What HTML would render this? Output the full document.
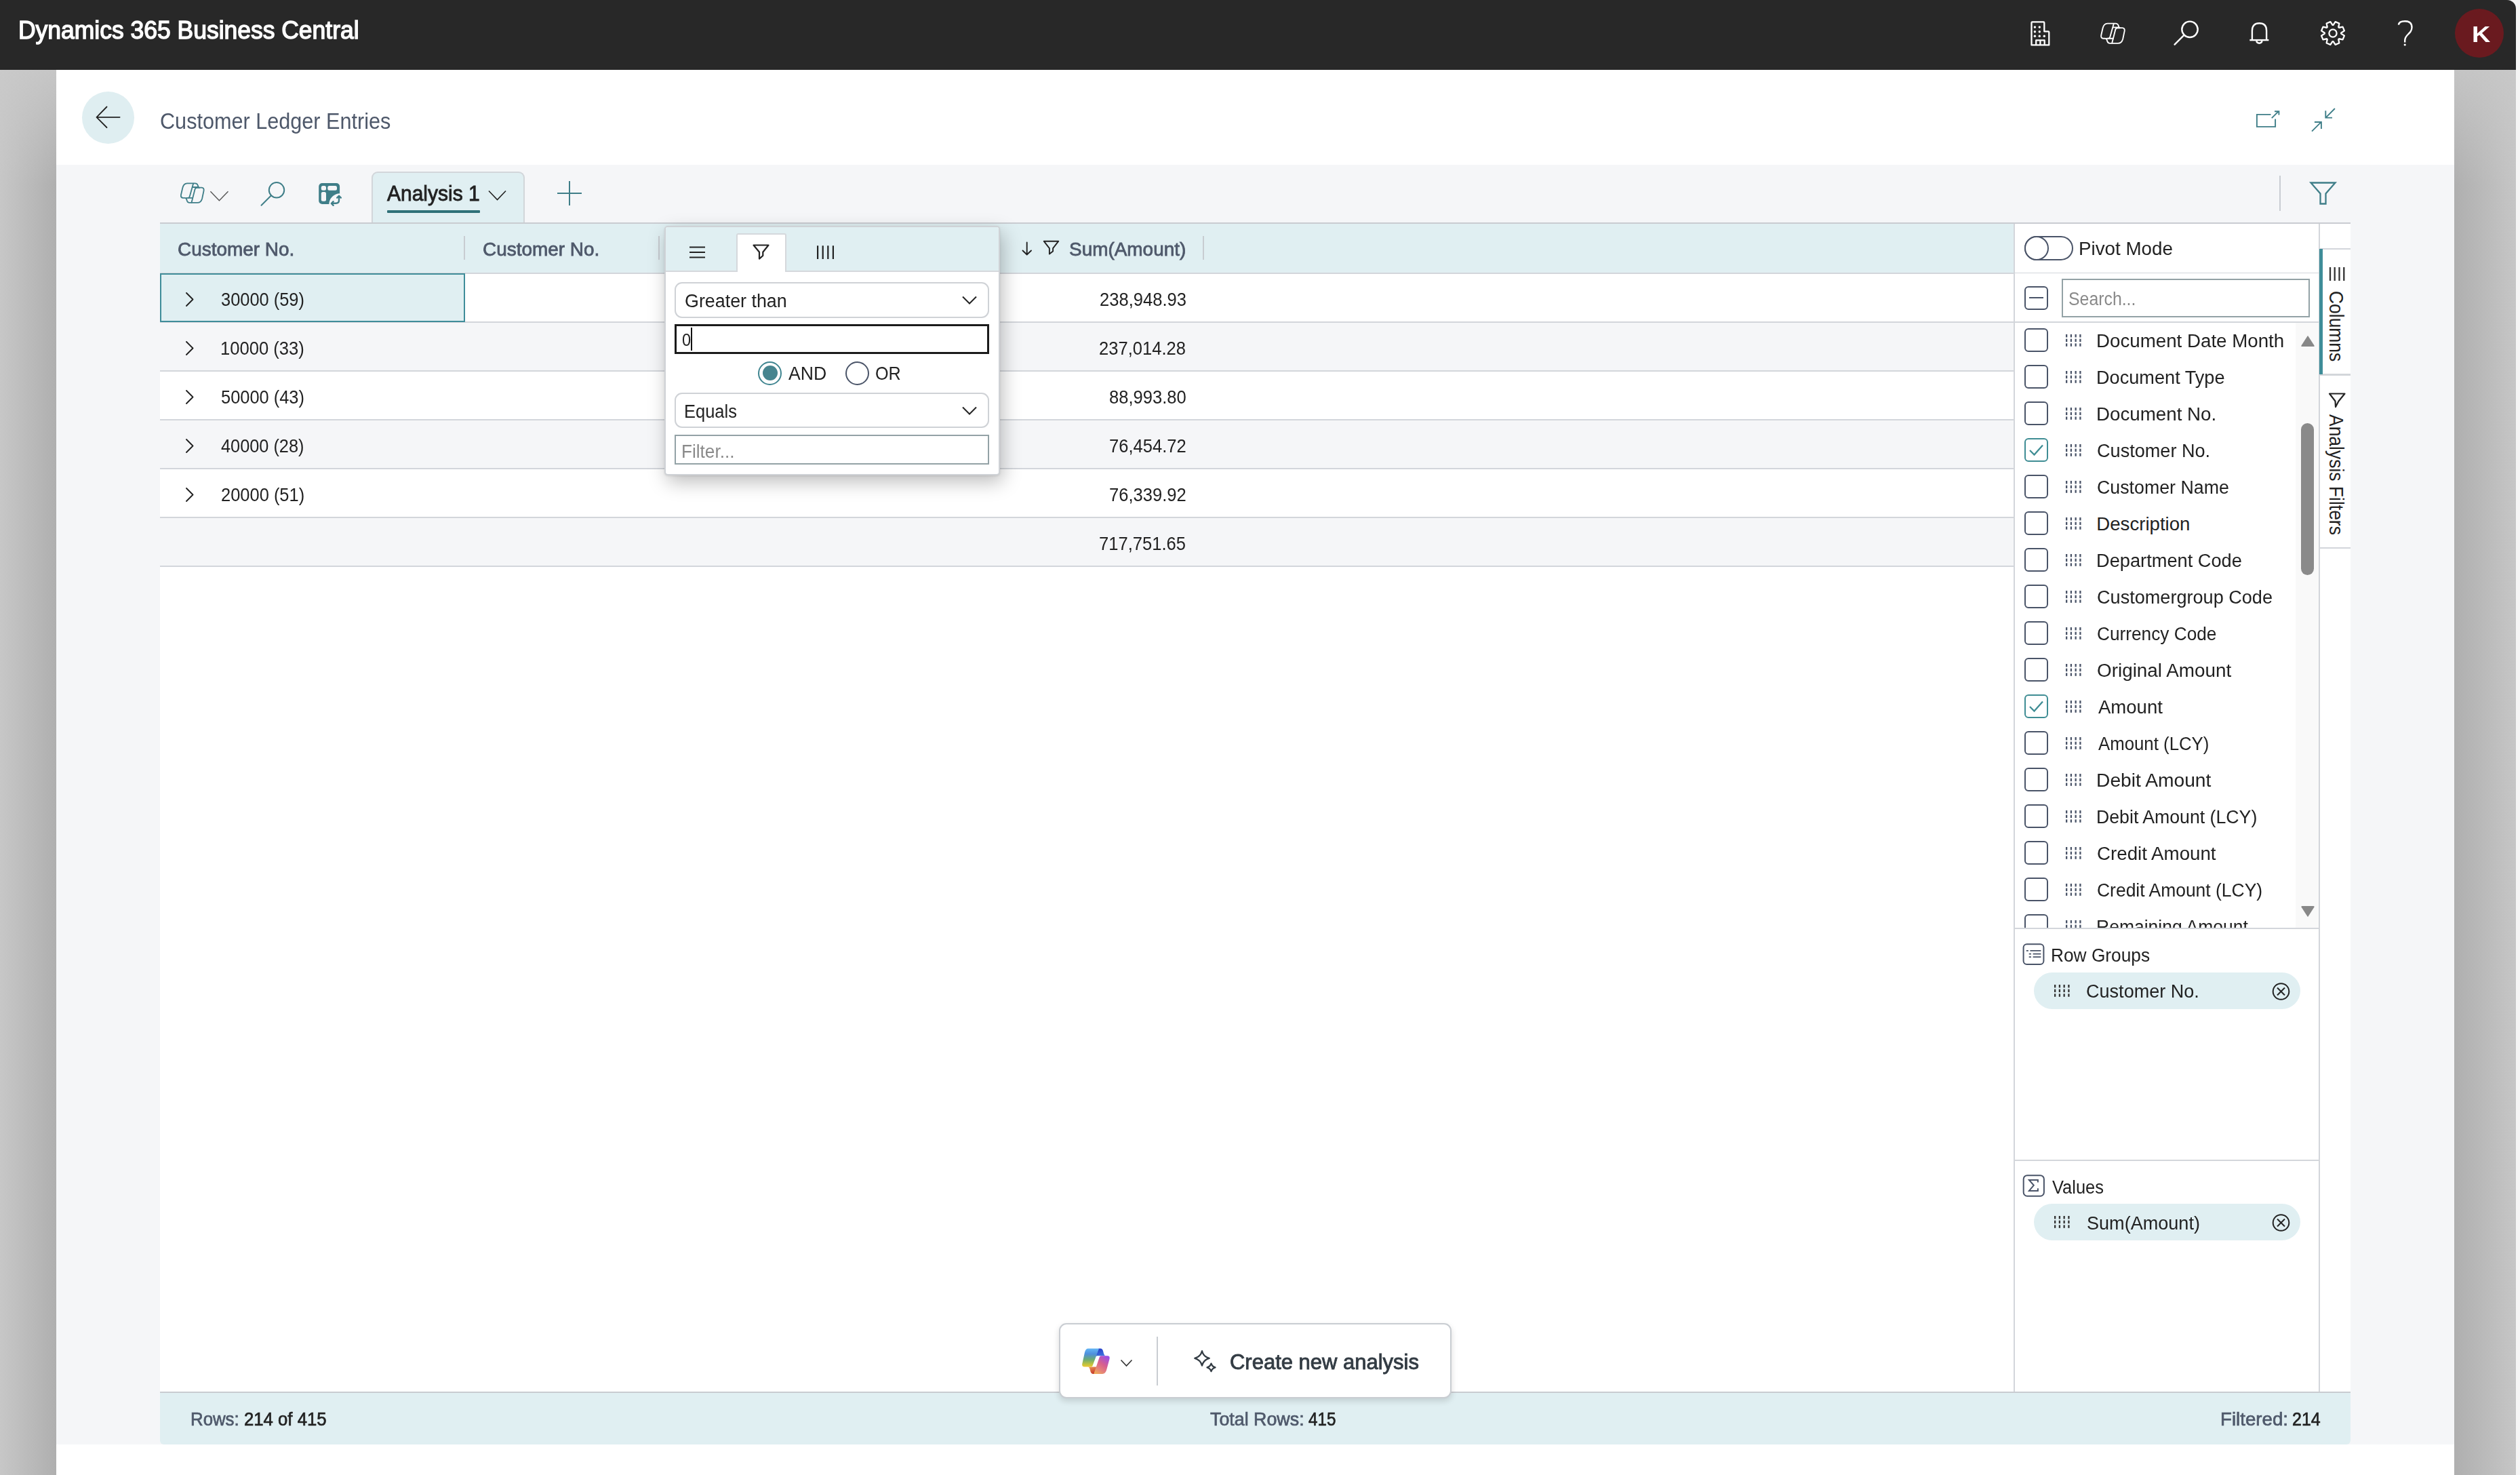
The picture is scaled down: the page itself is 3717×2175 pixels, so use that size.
<!DOCTYPE html>
<html><head><meta charset="utf-8"><title>Customer Ledger Entries</title>
<style>
html,body{margin:0;padding:0;}
body{width:3717px;height:2175px;overflow:hidden;position:relative;background:#f6f6f6;font-family:"Liberation Sans",sans-serif;}
.b{position:absolute;box-sizing:border-box;}
.t{position:absolute;white-space:nowrap;line-height:1;}
.s{position:absolute;overflow:visible;}
</style></head><body>
<div class="b" style="left:0px;top:0px;width:3711px;height:103px;background:#282828;border-top-right-radius:13px;"></div>
<div class="b" style="left:0px;top:103px;width:83px;height:2072px;background:linear-gradient(to bottom,rgba(202,202,202,0.85) 0px,rgba(202,202,202,0) 170px),linear-gradient(to right,#c7c7c7,#afafaf);"></div>
<div class="b" style="left:3620px;top:103px;width:91px;height:2072px;background:linear-gradient(to bottom,rgba(200,200,200,0.85) 0px,rgba(200,200,200,0) 170px),linear-gradient(to right,#afafaf,#c6c6c6);"></div>
<div class="b" style="left:83px;top:103px;width:3537px;height:2072px;background:#fff;"></div>
<div class="b" style="left:83px;top:243px;width:3537px;height:1887px;background:#f5f6f8;"></div>
<div class="t" style="left:26.8px;top:26.6px;font-size:36.34px;color:#fff;-webkit-text-stroke:1.4px #fff;transform:scaleX(0.9761);transform-origin:0 0;">Dynamics 365 Business Central</div>
<svg class="s" style="left:2990px;top:28px;" width="40" height="44" viewBox="0 0 40 44"><g fill="none" stroke="#ffffff" stroke-width="2.3" stroke-linejoin="round">
<path d="M6.5 38.4 V5.5 Q6.5 4.4 7.6 4.4 H24.2 Q25.3 4.4 25.3 5.5 V18.4 H31.2 Q32.3 18.4 32.3 19.5 V38.4 Z"/>
<path d="M13.2 38.4 V31.4 H25.7 V38.4 M19.4 31.4 V38.4"/></g>
<g fill="#ffffff"><circle cx="11.4" cy="12" r="1.7"/><circle cx="18.3" cy="12" r="1.7"/><circle cx="11.4" cy="18.7" r="1.7"/><circle cx="18.3" cy="18.7" r="1.7"/><circle cx="11.4" cy="25.3" r="1.7"/><circle cx="18.3" cy="25.3" r="1.7"/><circle cx="25.3" cy="25.3" r="1.7"/></g></svg>
<svg class="s" style="left:3090px;top:25px;" width="55.0" height="47.0" viewBox="0 0 55 47"><g fill="none" stroke="#ffffff" stroke-width="1.9" stroke-linejoin="round" stroke-linecap="round">
<path d="M18.5 9.6 H30.5 Q33.6 9.6 34.6 12.5 L35.4 14.8 Q35.8 16.1 37.4 16.1 H40.5 Q44.3 16.3 43.7 20.6 L41.2 32.5 Q39.5 38.9 34 38.9 H22 Q19.4 38.9 18.4 36.2 L17.4 33.2 Q16.9 31.7 15.2 31.7 H12.5 Q8.5 31.5 9.2 27 L11.6 16.5 Q13.3 9.6 18.5 9.6 Z"/>
<path d="M27.8 10 L22.3 29.5 Q21.8 31.3 20 31.6"/>
<path d="M26.8 15.4 H35.5"/>
<path d="M37 16.3 H33.2 Q30.9 16.3 30.3 18.6 L25.2 38.5"/>
<path d="M17.5 31.7 H26.8"/>
</g></svg>
<svg class="s" style="left:3200px;top:24px;" width="50" height="50" viewBox="0 0 50 50"><g fill="none" stroke="#ffffff" stroke-width="2.4" stroke-linecap="round"><circle cx="30" cy="19.3" r="11.7"/><path d="M21.6 27.7 L7.6 41.7"/></g></svg>
<svg class="s" style="left:3310px;top:28px;" width="44" height="44" viewBox="0 0 44 44"><g fill="none" stroke="#ffffff" stroke-width="2.4"><path d="M11.9 30.2 V17.2 Q11.9 6.3 22.5 6.3 Q33.1 6.3 33.1 17.2 V30.2"/><path d="M8.3 31.1 H36.4"/><path d="M18.2 32.3 A4.3 4.3 0 0 0 26.6 32.3"/></g></svg>
<svg class="s" style="left:3420.6px;top:29px;" width="40" height="40" viewBox="0 0 40 40"><g fill="none" stroke="#ffffff" stroke-width="2.3" stroke-linejoin="round"><path d="M20.52 7.81 L23.65 3.09 L29.37 5.46 L28.25 11.01 L28.99 11.75 L34.54 10.63 L36.91 16.35 L32.19 19.48 L32.19 20.52 L36.91 23.65 L34.54 29.37 L28.99 28.25 L28.25 28.99 L29.37 34.54 L23.65 36.91 L20.52 32.19 L19.48 32.19 L16.35 36.91 L10.63 34.54 L11.75 28.99 L11.01 28.25 L5.46 29.37 L3.09 23.65 L7.81 20.52 L7.81 19.48 L3.09 16.35 L5.46 10.63 L11.01 11.75 L11.75 11.01 L10.63 5.46 L16.35 3.09 L19.48 7.81Z"/><circle cx="20" cy="20" r="5.6"/></g></svg>
<svg class="s" style="left:3530px;top:28px;" width="36" height="44" viewBox="0 0 36 44"><g fill="none" stroke="#ffffff" stroke-width="2.4" stroke-linecap="butt"><path d="M7.9 8.7 Q8.5 3.3 17.4 3.3 Q27.5 3.3 27.5 12.5 Q27.5 17.5 22.5 22 Q17.2 27 17.2 31.5 V34.5"/></g><circle cx="17.2" cy="38" r="1.6" fill="#ffffff"/></svg>
<div class="b" style="left:3620.5px;top:13px;width:72px;height:72px;background:#6a1a1f;border-radius:50%;"></div>
<div class="t" style="left:3646.0px;top:34.2px;font-size:33.28px;color:#fff;font-weight:700;transform:scaleX(1.1369);transform-origin:0 0;">K</div>
<div class="b" style="left:121px;top:135px;width:77px;height:77px;background:#dfeef1;border-radius:50%;"></div>
<svg class="s" style="left:138px;top:153px;" width="44" height="40" viewBox="0 0 44 40"><g fill="none" stroke="#222" stroke-width="1.8" stroke-linecap="round" stroke-linejoin="round"><path d="M4.5 19.8 H38.6 M19.5 4.5 L4.5 19.8 L19.5 35"/></g></svg>
<div class="t" style="left:235.5px;top:161.7px;font-size:33.43px;color:#4e586a;transform:scaleX(0.9160);transform-origin:0 0;">Customer Ledger Entries</div>
<svg class="s" style="left:3300px;top:140px;" width="160" height="70" viewBox="0 0 160 70"><g fill="none" stroke="#3f7e88" stroke-width="1.9"><path d="M49.5 28.9 H28.9 V46.9 H56.1 V35.5"/><path d="M50.8 34.2 L60.6 24.4 M55 24.2 H61.4 V29.4"/><path d="M143.9 20 L130.6 33.3 M130.3 23.3 V33.6 H140"/><path d="M110 53.6 L123.3 40.3 M113.9 40 H123.9 V50"/></g></svg>
<svg class="s" style="left:257.8px;top:260.5px;" width="53.625" height="45.824999999999996" viewBox="0 0 55 47"><g fill="none" stroke="#3f7e88" stroke-width="1.9" stroke-linejoin="round" stroke-linecap="round">
<path d="M18.5 9.6 H30.5 Q33.6 9.6 34.6 12.5 L35.4 14.8 Q35.8 16.1 37.4 16.1 H40.5 Q44.3 16.3 43.7 20.6 L41.2 32.5 Q39.5 38.9 34 38.9 H22 Q19.4 38.9 18.4 36.2 L17.4 33.2 Q16.9 31.7 15.2 31.7 H12.5 Q8.5 31.5 9.2 27 L11.6 16.5 Q13.3 9.6 18.5 9.6 Z"/>
<path d="M27.8 10 L22.3 29.5 Q21.8 31.3 20 31.6"/>
<path d="M26.8 15.4 H35.5"/>
<path d="M37 16.3 H33.2 Q30.9 16.3 30.3 18.6 L25.2 38.5"/>
<path d="M17.5 31.7 H26.8"/>
</g></svg>
<svg class="s" style="left:306px;top:278px;" width="36" height="24" viewBox="0 0 36 24"><path d="M4.4 4.3 L17.4 17.8 L30.5 4.3" fill="none" stroke="#555" stroke-width="1.4"/></svg>
<svg class="s" style="left:380px;top:260px;" width="40" height="50" viewBox="0 0 40 50"><g fill="none" stroke="#3f7e88" stroke-width="2" stroke-linecap="round"><circle cx="28" cy="20.3" r="11.2"/><path d="M20 28.3 L5.5 42.8"/></g></svg>
<svg class="s" style="left:468px;top:268px;" width="40" height="40" viewBox="0 0 40 40"><defs><mask id="tm"><rect width="40" height="40" fill="#fff"/><circle cx="33.6" cy="33.6" r="16.3" fill="#000"/></mask></defs>
<rect x="2.2" y="2" width="30.9" height="31" rx="5" fill="#3f7e88" mask="url(#tm)"/>
<g fill="#f5f6f8"><rect x="5.8" y="6" width="7.2" height="6.8" rx="2.5"/><rect x="15.3" y="6" width="13.7" height="6.8" rx="2.5"/><rect x="5.8" y="14.9" width="7.2" height="13.9" rx="2.5"/></g>
<g fill="none" stroke="#3f7e88" stroke-width="2.4" stroke-linecap="round" stroke-linejoin="round"><path d="M32 21.5 V27.3 Q32 31.8 27.5 31.8 H21.8"/><path d="M29.2 23.6 L32 20.8 L34.8 23.6"/><path d="M23.6 29.2 L20.8 32 L23.6 34.8"/></g></svg>
<div class="b" style="left:548px;top:253px;width:226px;height:77px;background:#e0eff2;border:2px solid #d2d6da;border-bottom:none;border-radius:9px 9px 0 0;"></div>
<div class="t" style="left:571.4px;top:269.4px;font-size:32.12px;color:#222;-webkit-text-stroke:0.9px #222;transform:scaleX(0.9337);transform-origin:0 0;">Analysis 1</div>
<div class="b" style="left:571px;top:310px;width:137px;height:4px;background:#2f7178;border-radius:1px;"></div>
<svg class="s" style="left:716px;top:276px;" width="36" height="24" viewBox="0 0 36 24"><path d="M5 5.5 L17.5 18.5 L30 5.5" fill="none" stroke="#222" stroke-width="1.6"/></svg>
<svg class="s" style="left:818px;top:263px;" width="44" height="44" viewBox="0 0 44 44"><path d="M22 4 V40 M4 22 H40" fill="none" stroke="#3f7e88" stroke-width="2"/></svg>
<div class="b" style="left:3362px;top:259px;width:2px;height:52px;background:#c9cdd2;"></div>
<svg class="s" style="left:3404px;top:265px;" width="46" height="40" viewBox="0 0 46 40"><path d="M4.5 4.5 H40.5 L26.5 20.5 V35.5 H18.5 V20.5 Z" fill="none" stroke="#3f7e88" stroke-width="2.3" stroke-linejoin="miter"/></svg>
<div class="b" style="left:236px;top:328px;width:3231px;height:1724px;background:#fff;"></div>
<div class="b" style="left:236px;top:328px;width:3231px;height:2px;background:#c9ccd1;"></div>
<div class="b" style="left:236px;top:330px;width:2735px;height:73px;background:#e0eff2;"></div>
<div class="b" style="left:236px;top:402px;width:2735px;height:2px;background:#d3d6db;"></div>
<div class="b" style="left:236px;top:404px;width:2735px;height:71px;background:#fff;"></div>
<div class="b" style="left:236px;top:474px;width:2735px;height:2px;background:#d3d6db;"></div>
<div class="b" style="left:236px;top:476px;width:2735px;height:71px;background:#f5f6f8;"></div>
<div class="b" style="left:236px;top:546px;width:2735px;height:2px;background:#d3d6db;"></div>
<div class="b" style="left:236px;top:548px;width:2735px;height:71px;background:#fff;"></div>
<div class="b" style="left:236px;top:618px;width:2735px;height:2px;background:#d3d6db;"></div>
<div class="b" style="left:236px;top:620px;width:2735px;height:71px;background:#f5f6f8;"></div>
<div class="b" style="left:236px;top:690px;width:2735px;height:2px;background:#d3d6db;"></div>
<div class="b" style="left:236px;top:692px;width:2735px;height:71px;background:#fff;"></div>
<div class="b" style="left:236px;top:762px;width:2735px;height:2px;background:#d3d6db;"></div>
<div class="b" style="left:236px;top:764px;width:2735px;height:71px;background:#f5f6f8;"></div>
<div class="b" style="left:236px;top:834px;width:2735px;height:2px;background:#d3d6db;"></div>
<div class="b" style="left:236px;top:403px;width:450px;height:72px;background:#e0eff2;border:2px solid #3f8d9a;"></div>
<div class="b" style="left:684px;top:348px;width:2px;height:35px;background:#c8ccd1;"></div>
<div class="b" style="left:971px;top:348px;width:2px;height:35px;background:#c8ccd1;"></div>
<div class="b" style="left:1774px;top:348px;width:2px;height:35px;background:#c8ccd1;"></div>
<div class="t" style="left:262.0px;top:353.7px;font-size:27.62px;color:#4f596b;-webkit-text-stroke:0.8px #4f596b;transform:scaleX(1.0111);transform-origin:0 0;">Customer No.</div>
<div class="t" style="left:712.0px;top:353.7px;font-size:27.62px;color:#4f596b;-webkit-text-stroke:0.8px #4f596b;transform:scaleX(1.0111);transform-origin:0 0;">Customer No.</div>
<div class="t" style="left:1577.4px;top:353.7px;font-size:27.62px;color:#4f596b;-webkit-text-stroke:0.8px #4f596b;transform:scaleX(1.0114);transform-origin:0 0;">Sum(Amount)</div>
<svg class="s" style="left:1500px;top:350px;" width="30" height="32" viewBox="0 0 30 32"><g fill="none" stroke="#222" stroke-width="1.9" stroke-linecap="round" stroke-linejoin="round"><path d="M14.7 7.5 V25 M8.5 19.5 L14.7 25.5 L21 19.5"/></g></svg>
<svg class="s" style="left:1534px;top:350px;" width="34" height="32" viewBox="0 0 34 32"><path d="M5.7 5.7 H27.3 L19.1 16.1 V20.6 L13.9 24.6 V16.1 Z" fill="none" stroke="#222" stroke-width="1.9" stroke-linejoin="round"/></svg>
<svg class="s" style="left:268px;top:426px;" width="24" height="28" viewBox="0 0 24 28"><path d="M7 6 L16.5 15.5 L7 25" fill="none" stroke="#222" stroke-width="1.9" stroke-linecap="round" stroke-linejoin="round"/></svg>
<div class="t" style="left:325.7px;top:427.6px;font-size:27.62px;color:#222;transform:scaleX(0.9201);transform-origin:0 0;">30000 (59)</div>
<div class="t" style="left:1621.5px;top:427.6px;font-size:27.62px;color:#222;transform:scaleX(0.9260);transform-origin:0 0;">238,948.93</div>
<svg class="s" style="left:268px;top:498px;" width="24" height="28" viewBox="0 0 24 28"><path d="M7 6 L16.5 15.5 L7 25" fill="none" stroke="#222" stroke-width="1.9" stroke-linecap="round" stroke-linejoin="round"/></svg>
<div class="t" style="left:324.8px;top:499.6px;font-size:27.62px;color:#222;transform:scaleX(0.9275);transform-origin:0 0;">10000 (33)</div>
<div class="t" style="left:1621.4px;top:499.6px;font-size:27.62px;color:#222;transform:scaleX(0.9260);transform-origin:0 0;">237,014.28</div>
<svg class="s" style="left:268px;top:570px;" width="24" height="28" viewBox="0 0 24 28"><path d="M7 6 L16.5 15.5 L7 25" fill="none" stroke="#222" stroke-width="1.9" stroke-linecap="round" stroke-linejoin="round"/></svg>
<div class="t" style="left:325.7px;top:571.6px;font-size:27.62px;color:#222;transform:scaleX(0.9204);transform-origin:0 0;">50000 (43)</div>
<div class="t" style="left:1635.6px;top:571.6px;font-size:27.62px;color:#222;transform:scaleX(0.9260);transform-origin:0 0;">88,993.80</div>
<svg class="s" style="left:268px;top:642px;" width="24" height="28" viewBox="0 0 24 28"><path d="M7 6 L16.5 15.5 L7 25" fill="none" stroke="#222" stroke-width="1.9" stroke-linecap="round" stroke-linejoin="round"/></svg>
<div class="t" style="left:326.1px;top:643.6px;font-size:27.62px;color:#222;transform:scaleX(0.9169);transform-origin:0 0;">40000 (28)</div>
<div class="t" style="left:1635.8px;top:643.6px;font-size:27.62px;color:#222;transform:scaleX(0.9260);transform-origin:0 0;">76,454.72</div>
<svg class="s" style="left:268px;top:714px;" width="24" height="28" viewBox="0 0 24 28"><path d="M7 6 L16.5 15.5 L7 25" fill="none" stroke="#222" stroke-width="1.9" stroke-linecap="round" stroke-linejoin="round"/></svg>
<div class="t" style="left:325.5px;top:715.6px;font-size:27.62px;color:#222;transform:scaleX(0.9222);transform-origin:0 0;">20000 (51)</div>
<div class="t" style="left:1635.8px;top:715.6px;font-size:27.62px;color:#222;transform:scaleX(0.9260);transform-origin:0 0;">76,339.92</div>
<div class="t" style="left:1621.4px;top:787.6px;font-size:27.62px;color:#222;transform:scaleX(0.9260);transform-origin:0 0;">717,751.65</div>
<div class="b" style="left:2970px;top:330px;width:2px;height:1722px;background:#d3d6db;"></div>
<div class="b" style="left:3420px;top:330px;width:2px;height:1722px;background:#d3d6db;"></div>
<div class="b" style="left:236px;top:2053px;width:3231px;height:77px;background:#e0eff2;border-radius:0 0 6px 6px;"></div>
<div class="b" style="left:236px;top:2052px;width:3231px;height:2px;background:#c9ccd1;"></div>
<div class="b" style="left:980px;top:332.5px;width:495px;height:368.5px;background:#fff;border:2px solid #cfd2d6;border-radius:5px;box-shadow:4px 10px 28px rgba(0,0,0,0.26),0 1px 3px rgba(0,0,0,0.10);"></div>
<div class="b" style="left:982px;top:334.5px;width:491px;height:65.5px;background:#e0eff2;border-radius:3px 3px 0 0;"></div>
<div class="b" style="left:982px;top:399px;width:104px;height:2px;background:#d5d8dc;"></div>
<div class="b" style="left:1160px;top:399px;width:313px;height:2px;background:#d5d8dc;"></div>
<div class="b" style="left:1086px;top:344px;width:74px;height:57px;background:#fff;border:2px solid #d5d8dc;border-bottom:none;border-radius:3px 3px 0 0;"></div>
<svg class="s" style="left:1012px;top:356px;" width="34" height="32" viewBox="0 0 34 32"><path d="M5 8.5 H28 M5 16 H28 M5 23.5 H28" fill="none" stroke="#222" stroke-width="2.2"/></svg>
<svg class="s" style="left:1106px;top:356px;" width="34" height="32" viewBox="0 0 34 32"><path d="M5.5 5.5 H27.5 L19.3 15.8 V21 L14 25.6 V15.8 Z" fill="none" stroke="#222" stroke-width="2.2" stroke-linejoin="round"/></svg>
<svg class="s" style="left:1200px;top:356px;" width="34" height="32" viewBox="0 0 34 32"><path d="M6.1 6.2 V26 M13.7 6.2 V26 M21.3 6.2 V26 M28.9 6.2 V26" fill="none" stroke="#222" stroke-width="2.2"/></svg>
<div class="b" style="left:995px;top:415.5px;width:464px;height:53px;background:#fff;border:2px solid #cfd2d6;border-radius:11px;"></div>
<div class="t" style="left:1010.2px;top:429.0px;font-size:28.34px;color:#222;transform:scaleX(0.9477);transform-origin:0 0;">Greater than</div>
<svg class="s" style="left:1414px;top:430px;" width="32" height="24" viewBox="0 0 32 24"><path d="M6 7.5 L16 17.5 L26 7.5" fill="none" stroke="#222" stroke-width="2"/></svg>
<div class="b" style="left:995px;top:478px;width:464px;height:44px;background:#fff;border:3px solid #1b1b1b;"></div>
<div class="t" style="left:1006.1px;top:487.8px;font-size:26.16px;color:#222;transform:scaleX(0.9000);transform-origin:0 0;">0</div>
<div class="b" style="left:1019px;top:483px;width:2px;height:34px;background:#111;"></div>
<div class="b" style="left:1118px;top:532.5px;width:35px;height:35px;border:2.5px solid #3f8590;border-radius:50%;background:#fff;"></div>
<div class="b" style="left:1124.5px;top:539px;width:22px;height:22px;background:#47858f;border-radius:50%;"></div>
<div class="t" style="left:1163.0px;top:537.8px;font-size:26.89px;color:#222;transform:scaleX(0.9919);transform-origin:0 0;">AND</div>
<div class="b" style="left:1247px;top:532.5px;width:35px;height:35px;border:2.5px solid #4a5468;border-radius:50%;background:#fff;"></div>
<div class="t" style="left:1290.8px;top:537.8px;font-size:26.89px;color:#222;transform:scaleX(0.9379);transform-origin:0 0;">OR</div>
<div class="b" style="left:995px;top:579px;width:464px;height:52px;background:#fff;border:2px solid #cfd2d6;border-radius:11px;"></div>
<div class="t" style="left:1009.4px;top:591.5px;font-size:28.34px;color:#222;transform:scaleX(0.8993);transform-origin:0 0;">Equals</div>
<svg class="s" style="left:1414px;top:593px;" width="32" height="24" viewBox="0 0 32 24"><path d="M6 7.5 L16 17.5 L26 7.5" fill="none" stroke="#222" stroke-width="2"/></svg>
<div class="b" style="left:995px;top:641px;width:464px;height:44px;background:#fff;border:2px solid #93a2a6;"></div>
<div class="t" style="left:1004.9px;top:650.5px;font-size:28.34px;color:#8a8a8a;transform:scaleX(0.9227);transform-origin:0 0;">Filter...</div>
<div class="b" style="left:2972px;top:330px;width:448px;height:73px;background:#fff;"></div>
<div class="b" style="left:2972px;top:402px;width:448px;height:2px;background:#d3d6db;"></div>
<div class="b" style="left:2972px;top:403px;width:448px;height:72px;background:#fff;"></div>
<div class="b" style="left:2972px;top:474px;width:448px;height:2px;background:#d3d6db;"></div>
<div class="b" style="left:2986px;top:348px;width:71.5px;height:36px;border:2.3px solid #4a5468;border-radius:18px;background:#fff;"></div>
<div class="b" style="left:2986px;top:348px;width:36px;height:36px;border:2.3px solid #4a5468;border-radius:50%;background:#fff;"></div>
<div class="t" style="left:3065.7px;top:354.1px;font-size:27.03px;color:#222;transform:scaleX(1.0281);transform-origin:0 0;">Pivot Mode</div>
<div class="b" style="left:2986px;top:421.5px;width:35px;height:35px;border:2.3px solid #4a5468;border-radius:6px;background:#fff;"></div>
<div class="b" style="left:2993px;top:438px;width:21px;height:2.2px;background:#4a5468;"></div>
<div class="b" style="left:3041px;top:410.5px;width:366px;height:57px;border:2px solid #93a2a6;background:#fff;"></div>
<div class="t" style="left:3050.6px;top:426.6px;font-size:27.62px;color:#8a8a8a;transform:scaleX(0.8997);transform-origin:0 0;">Search...</div>
<div class="b" style="left:2972px;top:476px;width:448px;height:893px;overflow:hidden;background:#fff;"><div class="b" style="left:414px;top:0px;width:35px;height:894px;background:#f9f9f9;"></div>
<div class="b" style="left:14px;top:7.600000000000023px;width:35px;height:35px;border:2.3px solid #4a5468;border-radius:6px;background:#fff;"></div>
<svg class="s" style="left:74.59999999999991px;top:16.800000000000022px;" width="24" height="20" viewBox="0 0 24 20"><g fill="#4a5468"><rect x="0.00" y="0.00" width="2.3" height="4.4"/><rect x="0.00" y="6.70" width="2.3" height="4.4"/><rect x="0.00" y="13.40" width="2.3" height="4.4"/><rect x="6.75" y="0.00" width="2.3" height="4.4"/><rect x="6.75" y="6.70" width="2.3" height="4.4"/><rect x="6.75" y="13.40" width="2.3" height="4.4"/><rect x="13.50" y="0.00" width="2.3" height="4.4"/><rect x="13.50" y="6.70" width="2.3" height="4.4"/><rect x="13.50" y="13.40" width="2.3" height="4.4"/><rect x="20.25" y="0.00" width="2.3" height="4.4"/><rect x="20.25" y="6.70" width="2.3" height="4.4"/><rect x="20.25" y="13.40" width="2.3" height="4.4"/></g></svg>
<div class="t" style="left:120.3px;top:12.7px;font-size:27.62px;color:#222;transform:scaleX(1.0035);transform-origin:0 0;">Document Date Month</div>
<div class="b" style="left:14px;top:61.60000000000002px;width:35px;height:35px;border:2.3px solid #4a5468;border-radius:6px;background:#fff;"></div>
<svg class="s" style="left:74.59999999999991px;top:70.80000000000003px;" width="24" height="20" viewBox="0 0 24 20"><g fill="#4a5468"><rect x="0.00" y="0.00" width="2.3" height="4.4"/><rect x="0.00" y="6.70" width="2.3" height="4.4"/><rect x="0.00" y="13.40" width="2.3" height="4.4"/><rect x="6.75" y="0.00" width="2.3" height="4.4"/><rect x="6.75" y="6.70" width="2.3" height="4.4"/><rect x="6.75" y="13.40" width="2.3" height="4.4"/><rect x="13.50" y="0.00" width="2.3" height="4.4"/><rect x="13.50" y="6.70" width="2.3" height="4.4"/><rect x="13.50" y="13.40" width="2.3" height="4.4"/><rect x="20.25" y="0.00" width="2.3" height="4.4"/><rect x="20.25" y="6.70" width="2.3" height="4.4"/><rect x="20.25" y="13.40" width="2.3" height="4.4"/></g></svg>
<div class="t" style="left:120.4px;top:66.7px;font-size:27.62px;color:#222;transform:scaleX(0.9828);transform-origin:0 0;">Document Type</div>
<div class="b" style="left:14px;top:115.60000000000002px;width:35px;height:35px;border:2.3px solid #4a5468;border-radius:6px;background:#fff;"></div>
<svg class="s" style="left:74.59999999999991px;top:124.80000000000003px;" width="24" height="20" viewBox="0 0 24 20"><g fill="#4a5468"><rect x="0.00" y="0.00" width="2.3" height="4.4"/><rect x="0.00" y="6.70" width="2.3" height="4.4"/><rect x="0.00" y="13.40" width="2.3" height="4.4"/><rect x="6.75" y="0.00" width="2.3" height="4.4"/><rect x="6.75" y="6.70" width="2.3" height="4.4"/><rect x="6.75" y="13.40" width="2.3" height="4.4"/><rect x="13.50" y="0.00" width="2.3" height="4.4"/><rect x="13.50" y="6.70" width="2.3" height="4.4"/><rect x="13.50" y="13.40" width="2.3" height="4.4"/><rect x="20.25" y="0.00" width="2.3" height="4.4"/><rect x="20.25" y="6.70" width="2.3" height="4.4"/><rect x="20.25" y="13.40" width="2.3" height="4.4"/></g></svg>
<div class="t" style="left:120.3px;top:120.7px;font-size:27.62px;color:#222;transform:scaleX(1.0044);transform-origin:0 0;">Document No.</div>
<div class="b" style="left:14px;top:169.60000000000002px;width:35px;height:35px;border:2.3px solid #3f8d94;border-radius:6px;background:#fff;"></div>
<svg class="s" style="left:14px;top:169.60000000000002px;" width="35" height="35" viewBox="0 0 35 35"><path d="M8 18 L14.5 24.5 L27 10.5" fill="none" stroke="#3f8d94" stroke-width="2.3"/></svg>
<svg class="s" style="left:74.59999999999991px;top:178.8px;" width="24" height="20" viewBox="0 0 24 20"><g fill="#4a5468"><rect x="0.00" y="0.00" width="2.3" height="4.4"/><rect x="0.00" y="6.70" width="2.3" height="4.4"/><rect x="0.00" y="13.40" width="2.3" height="4.4"/><rect x="6.75" y="0.00" width="2.3" height="4.4"/><rect x="6.75" y="6.70" width="2.3" height="4.4"/><rect x="6.75" y="13.40" width="2.3" height="4.4"/><rect x="13.50" y="0.00" width="2.3" height="4.4"/><rect x="13.50" y="6.70" width="2.3" height="4.4"/><rect x="13.50" y="13.40" width="2.3" height="4.4"/><rect x="20.25" y="0.00" width="2.3" height="4.4"/><rect x="20.25" y="6.70" width="2.3" height="4.4"/><rect x="20.25" y="13.40" width="2.3" height="4.4"/></g></svg>
<div class="t" style="left:121.2px;top:174.7px;font-size:27.62px;color:#222;transform:scaleX(0.9811);transform-origin:0 0;">Customer No.</div>
<div class="b" style="left:14px;top:223.60000000000002px;width:35px;height:35px;border:2.3px solid #4a5468;border-radius:6px;background:#fff;"></div>
<svg class="s" style="left:74.59999999999991px;top:232.8px;" width="24" height="20" viewBox="0 0 24 20"><g fill="#4a5468"><rect x="0.00" y="0.00" width="2.3" height="4.4"/><rect x="0.00" y="6.70" width="2.3" height="4.4"/><rect x="0.00" y="13.40" width="2.3" height="4.4"/><rect x="6.75" y="0.00" width="2.3" height="4.4"/><rect x="6.75" y="6.70" width="2.3" height="4.4"/><rect x="6.75" y="13.40" width="2.3" height="4.4"/><rect x="13.50" y="0.00" width="2.3" height="4.4"/><rect x="13.50" y="6.70" width="2.3" height="4.4"/><rect x="13.50" y="13.40" width="2.3" height="4.4"/><rect x="20.25" y="0.00" width="2.3" height="4.4"/><rect x="20.25" y="6.70" width="2.3" height="4.4"/><rect x="20.25" y="13.40" width="2.3" height="4.4"/></g></svg>
<div class="t" style="left:121.2px;top:228.7px;font-size:27.62px;color:#222;transform:scaleX(0.9692);transform-origin:0 0;">Customer Name</div>
<div class="b" style="left:14px;top:277.6px;width:35px;height:35px;border:2.3px solid #4a5468;border-radius:6px;background:#fff;"></div>
<svg class="s" style="left:74.59999999999991px;top:286.8px;" width="24" height="20" viewBox="0 0 24 20"><g fill="#4a5468"><rect x="0.00" y="0.00" width="2.3" height="4.4"/><rect x="0.00" y="6.70" width="2.3" height="4.4"/><rect x="0.00" y="13.40" width="2.3" height="4.4"/><rect x="6.75" y="0.00" width="2.3" height="4.4"/><rect x="6.75" y="6.70" width="2.3" height="4.4"/><rect x="6.75" y="13.40" width="2.3" height="4.4"/><rect x="13.50" y="0.00" width="2.3" height="4.4"/><rect x="13.50" y="6.70" width="2.3" height="4.4"/><rect x="13.50" y="13.40" width="2.3" height="4.4"/><rect x="20.25" y="0.00" width="2.3" height="4.4"/><rect x="20.25" y="6.70" width="2.3" height="4.4"/><rect x="20.25" y="13.40" width="2.3" height="4.4"/></g></svg>
<div class="t" style="left:120.3px;top:282.7px;font-size:27.62px;color:#222;">Description</div>
<div class="b" style="left:14px;top:331.6px;width:35px;height:35px;border:2.3px solid #4a5468;border-radius:6px;background:#fff;"></div>
<svg class="s" style="left:74.59999999999991px;top:340.8px;" width="24" height="20" viewBox="0 0 24 20"><g fill="#4a5468"><rect x="0.00" y="0.00" width="2.3" height="4.4"/><rect x="0.00" y="6.70" width="2.3" height="4.4"/><rect x="0.00" y="13.40" width="2.3" height="4.4"/><rect x="6.75" y="0.00" width="2.3" height="4.4"/><rect x="6.75" y="6.70" width="2.3" height="4.4"/><rect x="6.75" y="13.40" width="2.3" height="4.4"/><rect x="13.50" y="0.00" width="2.3" height="4.4"/><rect x="13.50" y="6.70" width="2.3" height="4.4"/><rect x="13.50" y="13.40" width="2.3" height="4.4"/><rect x="20.25" y="0.00" width="2.3" height="4.4"/><rect x="20.25" y="6.70" width="2.3" height="4.4"/><rect x="20.25" y="13.40" width="2.3" height="4.4"/></g></svg>
<div class="t" style="left:120.4px;top:336.7px;font-size:27.62px;color:#222;transform:scaleX(0.9860);transform-origin:0 0;">Department Code</div>
<div class="b" style="left:14px;top:385.6px;width:35px;height:35px;border:2.3px solid #4a5468;border-radius:6px;background:#fff;"></div>
<svg class="s" style="left:74.59999999999991px;top:394.8px;" width="24" height="20" viewBox="0 0 24 20"><g fill="#4a5468"><rect x="0.00" y="0.00" width="2.3" height="4.4"/><rect x="0.00" y="6.70" width="2.3" height="4.4"/><rect x="0.00" y="13.40" width="2.3" height="4.4"/><rect x="6.75" y="0.00" width="2.3" height="4.4"/><rect x="6.75" y="6.70" width="2.3" height="4.4"/><rect x="6.75" y="13.40" width="2.3" height="4.4"/><rect x="13.50" y="0.00" width="2.3" height="4.4"/><rect x="13.50" y="6.70" width="2.3" height="4.4"/><rect x="13.50" y="13.40" width="2.3" height="4.4"/><rect x="20.25" y="0.00" width="2.3" height="4.4"/><rect x="20.25" y="6.70" width="2.3" height="4.4"/><rect x="20.25" y="13.40" width="2.3" height="4.4"/></g></svg>
<div class="t" style="left:121.2px;top:390.7px;font-size:27.62px;color:#222;transform:scaleX(0.9811);transform-origin:0 0;">Customergroup Code</div>
<div class="b" style="left:14px;top:439.6px;width:35px;height:35px;border:2.3px solid #4a5468;border-radius:6px;background:#fff;"></div>
<svg class="s" style="left:74.59999999999991px;top:448.8px;" width="24" height="20" viewBox="0 0 24 20"><g fill="#4a5468"><rect x="0.00" y="0.00" width="2.3" height="4.4"/><rect x="0.00" y="6.70" width="2.3" height="4.4"/><rect x="0.00" y="13.40" width="2.3" height="4.4"/><rect x="6.75" y="0.00" width="2.3" height="4.4"/><rect x="6.75" y="6.70" width="2.3" height="4.4"/><rect x="6.75" y="13.40" width="2.3" height="4.4"/><rect x="13.50" y="0.00" width="2.3" height="4.4"/><rect x="13.50" y="6.70" width="2.3" height="4.4"/><rect x="13.50" y="13.40" width="2.3" height="4.4"/><rect x="20.25" y="0.00" width="2.3" height="4.4"/><rect x="20.25" y="6.70" width="2.3" height="4.4"/><rect x="20.25" y="13.40" width="2.3" height="4.4"/></g></svg>
<div class="t" style="left:121.3px;top:444.7px;font-size:27.62px;color:#222;transform:scaleX(0.9503);transform-origin:0 0;">Currency Code</div>
<div class="b" style="left:14px;top:493.6px;width:35px;height:35px;border:2.3px solid #4a5468;border-radius:6px;background:#fff;"></div>
<svg class="s" style="left:74.59999999999991px;top:502.8px;" width="24" height="20" viewBox="0 0 24 20"><g fill="#4a5468"><rect x="0.00" y="0.00" width="2.3" height="4.4"/><rect x="0.00" y="6.70" width="2.3" height="4.4"/><rect x="0.00" y="13.40" width="2.3" height="4.4"/><rect x="6.75" y="0.00" width="2.3" height="4.4"/><rect x="6.75" y="6.70" width="2.3" height="4.4"/><rect x="6.75" y="13.40" width="2.3" height="4.4"/><rect x="13.50" y="0.00" width="2.3" height="4.4"/><rect x="13.50" y="6.70" width="2.3" height="4.4"/><rect x="13.50" y="13.40" width="2.3" height="4.4"/><rect x="20.25" y="0.00" width="2.3" height="4.4"/><rect x="20.25" y="6.70" width="2.3" height="4.4"/><rect x="20.25" y="13.40" width="2.3" height="4.4"/></g></svg>
<div class="t" style="left:121.3px;top:498.7px;font-size:27.62px;color:#222;transform:scaleX(1.0097);transform-origin:0 0;">Original Amount</div>
<div class="b" style="left:14px;top:547.6px;width:35px;height:35px;border:2.3px solid #3f8d94;border-radius:6px;background:#fff;"></div>
<svg class="s" style="left:14px;top:547.6px;" width="35" height="35" viewBox="0 0 35 35"><path d="M8 18 L14.5 24.5 L27 10.5" fill="none" stroke="#3f8d94" stroke-width="2.3"/></svg>
<svg class="s" style="left:74.59999999999991px;top:556.8000000000001px;" width="24" height="20" viewBox="0 0 24 20"><g fill="#4a5468"><rect x="0.00" y="0.00" width="2.3" height="4.4"/><rect x="0.00" y="6.70" width="2.3" height="4.4"/><rect x="0.00" y="13.40" width="2.3" height="4.4"/><rect x="6.75" y="0.00" width="2.3" height="4.4"/><rect x="6.75" y="6.70" width="2.3" height="4.4"/><rect x="6.75" y="13.40" width="2.3" height="4.4"/><rect x="13.50" y="0.00" width="2.3" height="4.4"/><rect x="13.50" y="6.70" width="2.3" height="4.4"/><rect x="13.50" y="13.40" width="2.3" height="4.4"/><rect x="20.25" y="0.00" width="2.3" height="4.4"/><rect x="20.25" y="6.70" width="2.3" height="4.4"/><rect x="20.25" y="13.40" width="2.3" height="4.4"/></g></svg>
<div class="t" style="left:122.6px;top:552.7px;font-size:27.62px;color:#222;transform:scaleX(0.9968);transform-origin:0 0;">Amount</div>
<div class="b" style="left:14px;top:601.5999999999999px;width:35px;height:35px;border:2.3px solid #4a5468;border-radius:6px;background:#fff;"></div>
<svg class="s" style="left:74.59999999999991px;top:610.8px;" width="24" height="20" viewBox="0 0 24 20"><g fill="#4a5468"><rect x="0.00" y="0.00" width="2.3" height="4.4"/><rect x="0.00" y="6.70" width="2.3" height="4.4"/><rect x="0.00" y="13.40" width="2.3" height="4.4"/><rect x="6.75" y="0.00" width="2.3" height="4.4"/><rect x="6.75" y="6.70" width="2.3" height="4.4"/><rect x="6.75" y="13.40" width="2.3" height="4.4"/><rect x="13.50" y="0.00" width="2.3" height="4.4"/><rect x="13.50" y="6.70" width="2.3" height="4.4"/><rect x="13.50" y="13.40" width="2.3" height="4.4"/><rect x="20.25" y="0.00" width="2.3" height="4.4"/><rect x="20.25" y="6.70" width="2.3" height="4.4"/><rect x="20.25" y="13.40" width="2.3" height="4.4"/></g></svg>
<div class="t" style="left:122.6px;top:606.7px;font-size:27.62px;color:#222;transform:scaleX(0.9341);transform-origin:0 0;">Amount (LCY)</div>
<div class="b" style="left:14px;top:655.5999999999999px;width:35px;height:35px;border:2.3px solid #4a5468;border-radius:6px;background:#fff;"></div>
<svg class="s" style="left:74.59999999999991px;top:664.8px;" width="24" height="20" viewBox="0 0 24 20"><g fill="#4a5468"><rect x="0.00" y="0.00" width="2.3" height="4.4"/><rect x="0.00" y="6.70" width="2.3" height="4.4"/><rect x="0.00" y="13.40" width="2.3" height="4.4"/><rect x="6.75" y="0.00" width="2.3" height="4.4"/><rect x="6.75" y="6.70" width="2.3" height="4.4"/><rect x="6.75" y="13.40" width="2.3" height="4.4"/><rect x="13.50" y="0.00" width="2.3" height="4.4"/><rect x="13.50" y="6.70" width="2.3" height="4.4"/><rect x="13.50" y="13.40" width="2.3" height="4.4"/><rect x="20.25" y="0.00" width="2.3" height="4.4"/><rect x="20.25" y="6.70" width="2.3" height="4.4"/><rect x="20.25" y="13.40" width="2.3" height="4.4"/></g></svg>
<div class="t" style="left:120.3px;top:660.7px;font-size:27.62px;color:#222;transform:scaleX(1.0220);transform-origin:0 0;">Debit Amount</div>
<div class="b" style="left:14px;top:709.5999999999999px;width:35px;height:35px;border:2.3px solid #4a5468;border-radius:6px;background:#fff;"></div>
<svg class="s" style="left:74.59999999999991px;top:718.8px;" width="24" height="20" viewBox="0 0 24 20"><g fill="#4a5468"><rect x="0.00" y="0.00" width="2.3" height="4.4"/><rect x="0.00" y="6.70" width="2.3" height="4.4"/><rect x="0.00" y="13.40" width="2.3" height="4.4"/><rect x="6.75" y="0.00" width="2.3" height="4.4"/><rect x="6.75" y="6.70" width="2.3" height="4.4"/><rect x="6.75" y="13.40" width="2.3" height="4.4"/><rect x="13.50" y="0.00" width="2.3" height="4.4"/><rect x="13.50" y="6.70" width="2.3" height="4.4"/><rect x="13.50" y="13.40" width="2.3" height="4.4"/><rect x="20.25" y="0.00" width="2.3" height="4.4"/><rect x="20.25" y="6.70" width="2.3" height="4.4"/><rect x="20.25" y="13.40" width="2.3" height="4.4"/></g></svg>
<div class="t" style="left:120.4px;top:714.7px;font-size:27.62px;color:#222;transform:scaleX(0.9665);transform-origin:0 0;">Debit Amount (LCY)</div>
<div class="b" style="left:14px;top:763.5999999999999px;width:35px;height:35px;border:2.3px solid #4a5468;border-radius:6px;background:#fff;"></div>
<svg class="s" style="left:74.59999999999991px;top:772.8px;" width="24" height="20" viewBox="0 0 24 20"><g fill="#4a5468"><rect x="0.00" y="0.00" width="2.3" height="4.4"/><rect x="0.00" y="6.70" width="2.3" height="4.4"/><rect x="0.00" y="13.40" width="2.3" height="4.4"/><rect x="6.75" y="0.00" width="2.3" height="4.4"/><rect x="6.75" y="6.70" width="2.3" height="4.4"/><rect x="6.75" y="13.40" width="2.3" height="4.4"/><rect x="13.50" y="0.00" width="2.3" height="4.4"/><rect x="13.50" y="6.70" width="2.3" height="4.4"/><rect x="13.50" y="13.40" width="2.3" height="4.4"/><rect x="20.25" y="0.00" width="2.3" height="4.4"/><rect x="20.25" y="6.70" width="2.3" height="4.4"/><rect x="20.25" y="13.40" width="2.3" height="4.4"/></g></svg>
<div class="t" style="left:121.2px;top:768.7px;font-size:27.62px;color:#222;transform:scaleX(1.0035);transform-origin:0 0;">Credit Amount</div>
<div class="b" style="left:14px;top:817.5999999999999px;width:35px;height:35px;border:2.3px solid #4a5468;border-radius:6px;background:#fff;"></div>
<svg class="s" style="left:74.59999999999991px;top:826.8px;" width="24" height="20" viewBox="0 0 24 20"><g fill="#4a5468"><rect x="0.00" y="0.00" width="2.3" height="4.4"/><rect x="0.00" y="6.70" width="2.3" height="4.4"/><rect x="0.00" y="13.40" width="2.3" height="4.4"/><rect x="6.75" y="0.00" width="2.3" height="4.4"/><rect x="6.75" y="6.70" width="2.3" height="4.4"/><rect x="6.75" y="13.40" width="2.3" height="4.4"/><rect x="13.50" y="0.00" width="2.3" height="4.4"/><rect x="13.50" y="6.70" width="2.3" height="4.4"/><rect x="13.50" y="13.40" width="2.3" height="4.4"/><rect x="20.25" y="0.00" width="2.3" height="4.4"/><rect x="20.25" y="6.70" width="2.3" height="4.4"/><rect x="20.25" y="13.40" width="2.3" height="4.4"/></g></svg>
<div class="t" style="left:121.3px;top:822.7px;font-size:27.62px;color:#222;transform:scaleX(0.9585);transform-origin:0 0;">Credit Amount (LCY)</div>
<div class="b" style="left:14px;top:871.5999999999999px;width:35px;height:35px;border:2.3px solid #4a5468;border-radius:6px;background:#fff;"></div>
<svg class="s" style="left:74.59999999999991px;top:880.8px;" width="24" height="20" viewBox="0 0 24 20"><g fill="#4a5468"><rect x="0.00" y="0.00" width="2.3" height="4.4"/><rect x="0.00" y="6.70" width="2.3" height="4.4"/><rect x="0.00" y="13.40" width="2.3" height="4.4"/><rect x="6.75" y="0.00" width="2.3" height="4.4"/><rect x="6.75" y="6.70" width="2.3" height="4.4"/><rect x="6.75" y="13.40" width="2.3" height="4.4"/><rect x="13.50" y="0.00" width="2.3" height="4.4"/><rect x="13.50" y="6.70" width="2.3" height="4.4"/><rect x="13.50" y="13.40" width="2.3" height="4.4"/><rect x="20.25" y="0.00" width="2.3" height="4.4"/><rect x="20.25" y="6.70" width="2.3" height="4.4"/><rect x="20.25" y="13.40" width="2.3" height="4.4"/></g></svg>
<div class="t" style="left:120.4px;top:876.7px;font-size:27.62px;color:#222;transform:scaleX(0.9600);transform-origin:0 0;">Remaining Amount</div>
<div class="b" style="left:421.5999999999999px;top:148px;width:19.4px;height:224px;background:#8a8a8a;border-radius:10px;"></div>
<svg class="s" style="left:420px;top:18px;" width="24" height="20" viewBox="0 0 24 20"><path d="M11.5 1.5 Q12 1 12.5 1.5 L21.5 15.5 Q22 17 20.5 17 H3.5 Q2 17 2.5 15.5 Z" fill="#888"/></svg>
<svg class="s" style="left:420px;top:859px;" width="24" height="20" viewBox="0 0 24 20"><path d="M11.5 16.5 Q12 17 12.5 16.5 L21.5 2.5 Q22 1 20.5 1 H3.5 Q2 1 2.5 2.5 Z" fill="#888"/></svg>
</div>
<div class="b" style="left:2972px;top:1368px;width:448px;height:2px;background:#d3d6db;"></div>
<div class="b" style="left:2972px;top:1370px;width:448px;height:682px;background:#fff;"></div>
<svg class="s" style="left:2982px;top:1390px;" width="34" height="34" viewBox="0 0 34 34"><g fill="none" stroke="#4a5468"><rect x="2.6" y="2.3" width="29.8" height="29.6" rx="5" stroke-width="2"/><path d="M6.8 11.9 H9.9 M12.4 11.9 H28.4 M10.7 16.6 H14 M16.6 16.6 H28.4 M10.7 21.2 H14 M16.6 21.2 H28.4" stroke-width="1.8"/></g></svg>
<div class="t" style="left:3024.9px;top:1394.6px;font-size:27.62px;color:#222;transform:scaleX(0.9521);transform-origin:0 0;">Row Groups</div>
<div class="b" style="left:3000px;top:1434.2px;width:393px;height:53.7px;background:#e0eff2;border-radius:27px;"></div>
<svg class="s" style="left:3030px;top:1452px;" width="24" height="20" viewBox="0 0 24 20"><g fill="#333"><rect x="0.00" y="0.00" width="2.3" height="4.4"/><rect x="0.00" y="6.70" width="2.3" height="4.4"/><rect x="0.00" y="13.40" width="2.3" height="4.4"/><rect x="6.75" y="0.00" width="2.3" height="4.4"/><rect x="6.75" y="6.70" width="2.3" height="4.4"/><rect x="6.75" y="13.40" width="2.3" height="4.4"/><rect x="13.50" y="0.00" width="2.3" height="4.4"/><rect x="13.50" y="6.70" width="2.3" height="4.4"/><rect x="13.50" y="13.40" width="2.3" height="4.4"/><rect x="20.25" y="0.00" width="2.3" height="4.4"/><rect x="20.25" y="6.70" width="2.3" height="4.4"/><rect x="20.25" y="13.40" width="2.3" height="4.4"/></g></svg>
<div class="t" style="left:3077.4px;top:1448.2px;font-size:27.62px;color:#222;transform:scaleX(0.9799);transform-origin:0 0;">Customer No.</div>
<svg class="s" style="left:3350px;top:1447.5px;" width="30" height="30" viewBox="0 0 30 30"><g fill="none" stroke="#222" stroke-width="2"><circle cx="14.5" cy="14" r="11.8"/><path d="M9 8.5 L20 19.5 M20 8.5 L9 19.5"/></g></svg>
<div class="b" style="left:2972px;top:1710px;width:448px;height:2px;background:#d3d6db;"></div>
<svg class="s" style="left:2982px;top:1730px;" width="34" height="36" viewBox="0 0 34 36"><g fill="none" stroke="#4a5468" stroke-width="2"><rect x="2.7" y="3.2" width="30.2" height="30.5" rx="5.5"/><path d="M23.9 13.6 V9.9 H10.9 L17.8 17.8 L10.9 25.9 H23.9 V22.2" stroke-linejoin="miter"/></g></svg>
<div class="t" style="left:3026.9px;top:1736.6px;font-size:27.62px;color:#222;transform:scaleX(0.9225);transform-origin:0 0;">Values</div>
<div class="b" style="left:3000px;top:1775.2px;width:393px;height:53.7px;background:#e0eff2;border-radius:27px;"></div>
<svg class="s" style="left:3030px;top:1793px;" width="24" height="20" viewBox="0 0 24 20"><g fill="#333"><rect x="0.00" y="0.00" width="2.3" height="4.4"/><rect x="0.00" y="6.70" width="2.3" height="4.4"/><rect x="0.00" y="13.40" width="2.3" height="4.4"/><rect x="6.75" y="0.00" width="2.3" height="4.4"/><rect x="6.75" y="6.70" width="2.3" height="4.4"/><rect x="6.75" y="13.40" width="2.3" height="4.4"/><rect x="13.50" y="0.00" width="2.3" height="4.4"/><rect x="13.50" y="6.70" width="2.3" height="4.4"/><rect x="13.50" y="13.40" width="2.3" height="4.4"/><rect x="20.25" y="0.00" width="2.3" height="4.4"/><rect x="20.25" y="6.70" width="2.3" height="4.4"/><rect x="20.25" y="13.40" width="2.3" height="4.4"/></g></svg>
<div class="t" style="left:3077.6px;top:1790.0px;font-size:27.62px;color:#222;transform:scaleX(0.9803);transform-origin:0 0;">Sum(Amount)</div>
<svg class="s" style="left:3350px;top:1788.5px;" width="30" height="30" viewBox="0 0 30 30"><g fill="none" stroke="#222" stroke-width="2"><circle cx="14.5" cy="14" r="11.8"/><path d="M9 8.5 L20 19.5 M20 8.5 L9 19.5"/></g></svg>
<div class="b" style="left:3422px;top:330px;width:45px;height:1722px;background:#fff;"></div>
<div class="b" style="left:3422px;top:366px;width:45px;height:2px;background:#d3d6db;"></div>
<div class="b" style="left:3422px;top:551px;width:45px;height:3px;background:#d3d6da;"></div>
<div class="b" style="left:3421px;top:367px;width:5px;height:185px;background:#3f8d99;"></div>
<div class="b" style="left:3422px;top:807px;width:45px;height:2px;background:#d3d6db;"></div>
<svg class="s" style="left:3430px;top:390px;" width="34" height="28" viewBox="0 0 34 28"><path d="M7 4 V24 M13.7 4 V24 M20.5 4 V24 M27.3 4 V24" fill="none" stroke="#333" stroke-width="2.3"/></svg>
<div class="t" style="left:3461.0px;top:428.7px;font-size:29.65px;color:#222;transform:rotate(90deg) scaleX(0.8912);transform-origin:0 0;">Columns</div>
<svg class="s" style="left:3430px;top:574px;" width="34" height="34" viewBox="0 0 34 34"><path d="M6 6.5 H28.5 L19.5 17.5 L15 26 L14.5 17.5 Z" fill="none" stroke="#222" stroke-width="2.2" stroke-linejoin="round"/></svg>
<div class="t" style="left:3461.0px;top:611.0px;font-size:29.65px;color:#222;transform:rotate(90deg) scaleX(0.8926);transform-origin:0 0;">Analysis Filters</div>
<div class="t" style="left:281.0px;top:2079.9px;font-size:26.89px;color:#4f596b;-webkit-text-stroke:0.7px #4f596b;transform:scaleX(0.9601);transform-origin:0 0;">Rows:</div>
<div class="t" style="left:359.5px;top:2079.9px;font-size:26.89px;color:#222;-webkit-text-stroke:0.7px #222;transform:scaleX(0.9567);transform-origin:0 0;">214 of 415</div>
<div class="t" style="left:1785.3px;top:2079.9px;font-size:26.89px;color:#4f596b;-webkit-text-stroke:0.7px #4f596b;transform:scaleX(0.9978);transform-origin:0 0;">Total Rows:</div>
<div class="t" style="left:1930.3px;top:2079.9px;font-size:26.89px;color:#222;-webkit-text-stroke:0.7px #222;transform:scaleX(0.8992);transform-origin:0 0;">415</div>
<div class="t" style="left:3275.1px;top:2079.9px;font-size:26.89px;color:#4f596b;-webkit-text-stroke:0.7px #4f596b;transform:scaleX(1.0297);transform-origin:0 0;">Filtered:</div>
<div class="t" style="left:3380.7px;top:2079.9px;font-size:26.89px;color:#222;-webkit-text-stroke:0.7px #222;transform:scaleX(0.9287);transform-origin:0 0;">214</div>
<div class="b" style="left:1561.8px;top:1951px;width:579.5px;height:111px;background:#fff;border:2px solid #c9cdd2;border-radius:11px;box-shadow:0 4px 10px rgba(0,0,0,0.14);"></div>
<svg class="s" style="left:1585px;top:1978px;" width="65" height="57" viewBox="0 0 65 57"><defs>
<linearGradient id="cg1" x1="0" y1="0" x2="0" y2="1"><stop offset="0" stop-color="#62b6f5"/><stop offset="0.3" stop-color="#4f8fdc"/><stop offset="0.6" stop-color="#6cab72"/><stop offset="0.85" stop-color="#bfc23e"/><stop offset="1" stop-color="#f0c832"/></linearGradient>
<linearGradient id="cg2" x1="0.8" y1="0" x2="0.2" y2="1"><stop offset="0" stop-color="#9a4fe6"/><stop offset="0.45" stop-color="#d8608e"/><stop offset="0.75" stop-color="#e5827a"/><stop offset="1" stop-color="#eeaa5a"/></linearGradient>
<linearGradient id="cg3" x1="0" y1="0" x2="0.4" y2="1"><stop offset="0" stop-color="#2436c4"/><stop offset="1" stop-color="#3f78e0"/></linearGradient>
<linearGradient id="cg4" x1="0" y1="0" x2="0.4" y2="1"><stop offset="0" stop-color="#ec9a58"/><stop offset="1" stop-color="#c83c2c"/></linearGradient>
</defs>
<path d="M35.5 10.4 H38.5 Q41 10.4 42 14 L43.2 18.5 Q44 21.3 46.5 21.3 H33.5 Q31.2 21.3 30.6 23.5 Z" fill="url(#cg3)"/>
<path d="M20 37.6 H32.5 L29.5 47.9 H27.5 Q24.5 47.9 23.5 44.5 L22.5 40.5 Q21.7 37.6 19.5 37.6 Z" fill="url(#cg4)"/>
<path d="M20 10.4 H36 L26.5 36 Q25.9 37.6 23.8 37.6 H14.5 Q10.8 37.6 11.2 33.5 L15 16 Q16.3 10.4 20 10.4 Z" fill="url(#cg1)"/>
<path d="M39.5 21.3 H48.5 Q52.3 21.3 51.6 25.5 L47.3 41.5 Q45.8 47.9 41 47.9 H28.3 L36.7 23.2 Q37.3 21.3 39.5 21.3 Z" fill="url(#cg2)"/></svg>
<svg class="s" style="left:1648px;top:2000px;" width="28" height="22" viewBox="0 0 28 22"><path d="M5.5 5.5 L13.5 14 L21.5 5.5" fill="none" stroke="#333" stroke-width="1.6"/></svg>
<div class="b" style="left:1706.3px;top:1971px;width:2px;height:71.7px;background:#c9cdd2;"></div>
<svg class="s" style="left:1758px;top:1988px;" width="40" height="40" viewBox="0 0 40 40"><g fill="none" stroke="#333c44" stroke-width="2.3" stroke-linejoin="round"><path d="M15 4.2 Q17.3 12.6 25.7 14.9 Q17.3 17.2 15 25.6 Q12.7 17.2 4.3 14.9 Q12.7 12.6 15 4.2 Z"/><path d="M28.5 22.6 Q29.9 27 34.5 28.4 Q29.9 29.8 28.5 34.2 Q27.1 29.8 22.5 28.4 Q27.1 27 28.5 22.6 Z"/></g></svg>
<div class="t" style="left:1813.9px;top:1993.1px;font-size:31.83px;color:#333c44;-webkit-text-stroke:0.9px #333c44;transform:scaleX(0.9731);transform-origin:0 0;">Create new analysis</div>
</body></html>
